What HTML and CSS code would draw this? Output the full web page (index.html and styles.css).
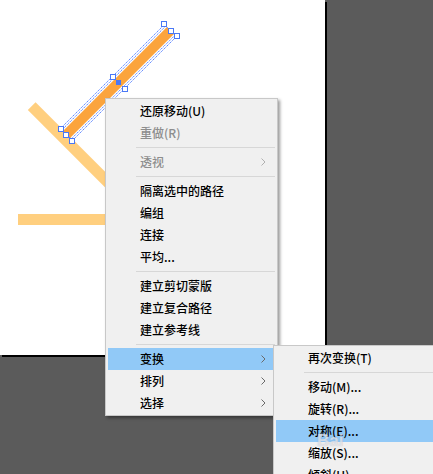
FILE: index.html
```html
<!DOCTYPE html>
<html lang="zh-CN">
<head>
<meta charset="utf-8">
<title>Context menu</title>
<link rel="stylesheet" href="styles.css">
</head>
<body>
<div class="workspace">
  <div class="artboard">
    <svg class="art" width="325" height="355" viewBox="0 0 325 355">
      <line x1="31.7" y1="106.2" x2="150" y2="224.5" stroke="#ffcf7f" stroke-width="11"/>
      <rect x="18" y="214" width="110" height="11" fill="#ffcf7f"/>
      <g transform="translate(118.5 82.5) rotate(-45)">
        <rect x="-73.5" y="-5" width="147" height="10" fill="#fba43d"/>
        <rect x="-73.5" y="-6.5" width="147" height="13" fill="none" stroke="#4f7cff" stroke-width="0.9" stroke-dasharray="1.4 0.8"/>
        <rect x="-73.5" y="-8.5" width="147" height="17" fill="none" stroke="#4f7cff" stroke-width="0.9" stroke-dasharray="1.4 0.8"/>
      </g>
      <g fill="#fff" stroke="#4a78f5" stroke-width="1">
        <rect x="58.5" y="126.5" width="5" height="5"/>
        <rect x="69.5" y="138.5" width="5" height="5"/>
        <rect x="174.5" y="33.5" width="5" height="5"/>
        <rect x="161.5" y="21.5" width="5" height="5"/>
        <rect x="63.5" y="132.5" width="5" height="5"/>
        <rect x="168.5" y="28.5" width="5" height="5"/>
        <rect x="110.5" y="74.5" width="5" height="5"/>
        <rect x="122.5" y="86.5" width="5" height="5"/>
      </g>
      <rect x="116" y="80" width="5" height="5" fill="#4a78f5"/>
    </svg>
  </div>
</div>

<div class="menu menu-main">
  <div class="item">还原移动(U)</div>
  <div class="item disabled">重做(R)</div>
  <div class="sep"></div>
  <div class="item disabled"><span class="label">透视</span><svg class="chev" width="5" height="8" viewBox="0 0 5 8"><path d="M0.5 0.5 L4 4 L0.5 7.5" fill="none" stroke="currentColor" stroke-width="1"/></svg></div>
  <div class="sep"></div>
  <div class="item">隔离选中的路径</div>
  <div class="item">编组</div>
  <div class="item">连接</div>
  <div class="item">平均...</div>
  <div class="sep"></div>
  <div class="item">建立剪切蒙版</div>
  <div class="item">建立复合路径</div>
  <div class="item">建立参考线</div>
  <div class="sep"></div>
  <div class="item active"><span class="label">变换</span><svg class="chev" width="5" height="8" viewBox="0 0 5 8"><path d="M0.5 0.5 L4 4 L0.5 7.5" fill="none" stroke="currentColor" stroke-width="1"/></svg></div>
  <div class="item"><span class="label">排列</span><svg class="chev" width="5" height="8" viewBox="0 0 5 8"><path d="M0.5 0.5 L4 4 L0.5 7.5" fill="none" stroke="currentColor" stroke-width="1"/></svg></div>
  <div class="item"><span class="label">选择</span><svg class="chev" width="5" height="8" viewBox="0 0 5 8"><path d="M0.5 0.5 L4 4 L0.5 7.5" fill="none" stroke="currentColor" stroke-width="1"/></svg></div>
</div>

<div class="menu menu-sub">
  <div class="item">再次变换(T)</div>
  <div class="sep"></div>
  <div class="item">移动(M)...</div>
  <div class="item">旋转(R)...</div>
  <div class="item active"><span class="label">对称(E)...</span><span class="watermark">Bai</span></div>
  <div class="item">缩放(S)...</div>
  <div class="item">倾斜(H)...</div>
</div>
</body>
</html>
```
FILE: styles.css
```css
html, body {
  margin: 0;
  padding: 0;
}
body {
  width: 433px;
  height: 474px;
  overflow: hidden;
  background: #5b5b5b;
  position: relative;
  font-family: "Noto Sans CJK SC", "Noto Sans", sans-serif;
  font-size: 12px;
  font-weight: 500;
  color: #000;
}
.workspace {
  display: flex;
}
.artboard {
  width: 325px;
  height: 355px;
  background: #fff;
  box-shadow: 2px 2px 0 #000;
}
.art {
  display: block;
}
.menu {
  position: absolute;
  box-sizing: border-box;
  background: #f0f0f0;
  border: 1px solid #c8c8c8;
  padding: 1px 2px;
  box-shadow: 2px 2px 3px rgba(0, 0, 0, 0.4);
}
.menu-main {
  left: 105px;
  top: 98px;
  width: 173px;
}
.menu-sub {
  left: 273px;
  top: 345px;
  width: 160px;
  border-right: 0;
  padding-right: 0;
  box-shadow: none;
}
.item {
  position: relative;
  height: 22px;
  display: flex;
  align-items: center;
  padding-left: 32px;
  padding-right: 9px;
  line-height: 22px;
  white-space: nowrap;
}
.item .label {
  flex: 1;
}
.item.disabled {
  color: #8d8d8d;
}
.item.active {
  background: #91c9f7;
}
.chev {
  display: block;
  color: #6a6a6a;
}
.item.disabled .chev {
  color: #b0b0b0;
}
.sep {
  height: 1px;
  background: #d7d7d7;
  margin: 3px 0 3px 28px;
}
.watermark {
  position: absolute;
  left: 41px;
  top: 12px;
  font-family: "Liberation Sans", sans-serif;
  font-weight: bold;
  font-size: 17px;
  line-height: 17px;
  color: rgba(255, 255, 255, 0.6);
  text-shadow: 0 0 1px rgba(120, 120, 140, 0.5);
}
```
